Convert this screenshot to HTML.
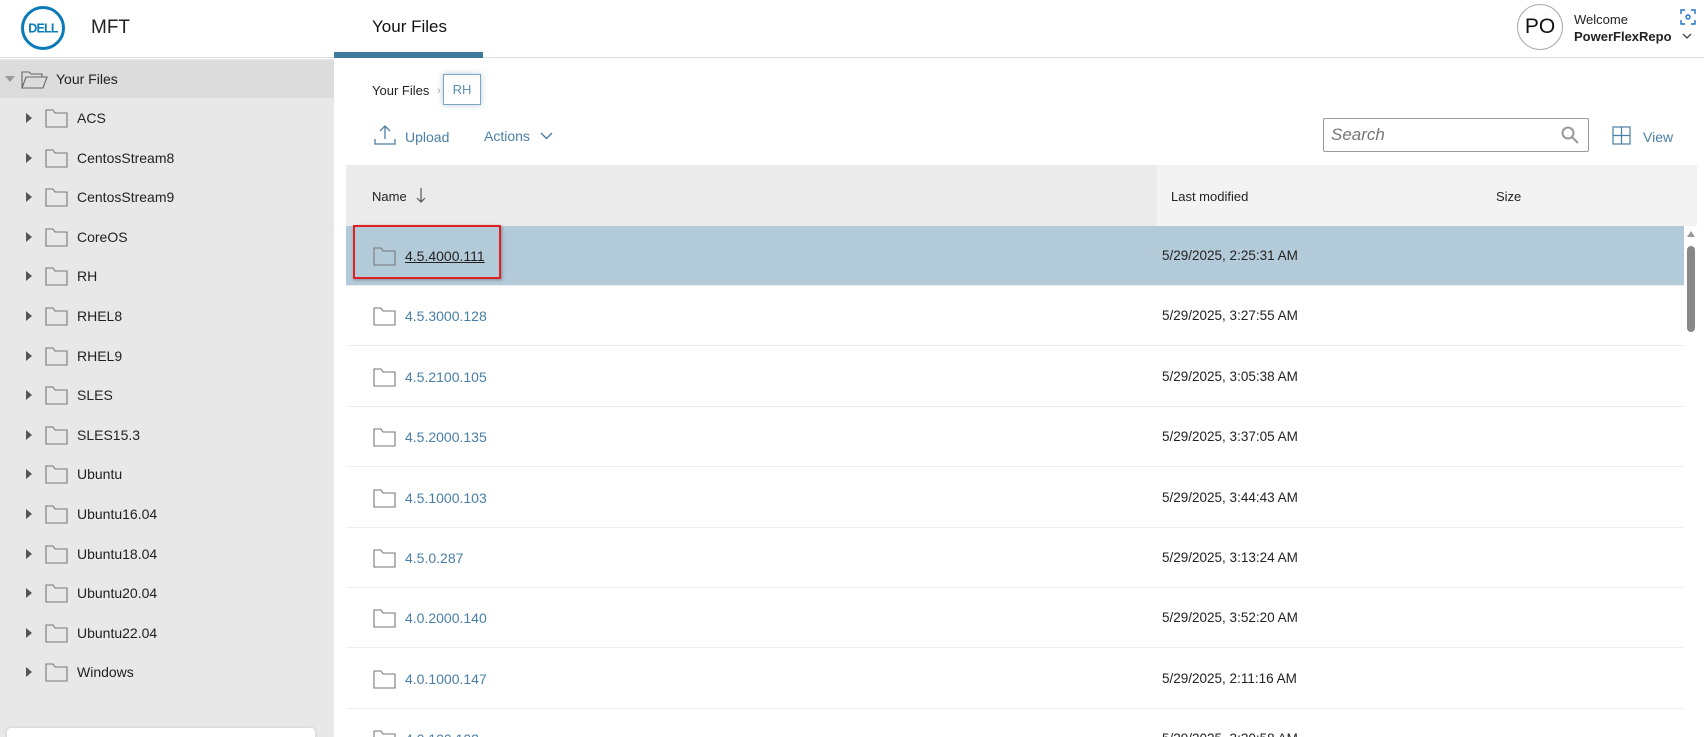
<!DOCTYPE html>
<html style="overflow:hidden"><head><meta charset="utf-8"><style>
*{box-sizing:border-box;margin:0;padding:0}
html,body{width:1704px;height:737px;overflow:hidden}
body{background:#fff;font-family:"Liberation Sans",sans-serif;color:#222;font-size:14px}
#wrap{position:relative;width:1704px;height:737px;overflow:hidden}
.a{position:absolute}
.hdr{left:0;top:0;width:1704px;height:58px;border-bottom:1px solid #ddd;background:#fff}
.side{left:0;top:59px;width:334px;height:678px;background:#e8e8e8}
.tri{width:0;height:0;border-top:5px solid transparent;border-bottom:5px solid transparent;border-left:6px solid #555}
.t{position:absolute;line-height:16px}
.blue{color:#4a7fa5}
.row{position:absolute;left:346px;width:1338px;height:60px;border-bottom:1px solid #eee}
</style></head><body><div id="wrap">
<div class="a hdr"></div>
<svg class="a" style="left:19px;top:5px" width="48" height="46" viewBox="0 0 48 46"><circle cx="24" cy="23" r="20.5" fill="none" stroke="#0b7ab8" stroke-width="3"/><text x="24" y="27.5" text-anchor="middle" font-family="Liberation Sans" font-weight="bold" font-size="12.5" fill="#0b7ab8" letter-spacing="-0.8">DELL</text></svg>
<div class="a t" style="left:91px;top:18px;font-size:19px;line-height:20px">MFT</div>
<div class="a t" style="left:372px;top:17px;font-size:17px;line-height:20px;color:#111">Your Files</div>
<div class="a" style="left:334px;top:52px;width:149px;height:6px;background:#3e7a9c"></div>
<div class="a" style="left:1517px;top:4px;width:46px;height:46px;border:1px solid #aaa;border-radius:50%;text-align:center;line-height:44px;font-size:21px;color:#111">PO</div>
<div class="a t" style="left:1574px;top:12px;font-size:13px">Welcome</div>
<div class="a t" style="left:1574px;top:29px;font-size:13px;font-weight:bold">PowerFlexRepo</div>
<svg class="a" style="left:1682px;top:33px" width="10" height="7"><path d="M1 1l4 4 4-4" fill="none" stroke="#444" stroke-width="1.3"/></svg>
<svg class="a" style="left:1680px;top:9px" width="16" height="16" viewBox="0 0 16 16" fill="none" stroke="#1a73c9" stroke-width="1.4"><path d="M1 5V1h4M11 1h4v4M15 11v4h-4M5 15H1v-4"/><circle cx="8" cy="8" r="2"/></svg>

<div class="a side"></div>
<div class="a" style="left:0;top:60px;width:334px;height:38px;background:#dcdcdc"></div>
<div class="a" style="left:5px;top:76px;border-left:5px solid transparent;border-right:5px solid transparent;border-top:6px solid #999;width:0;height:0"></div>
<svg class="a" style="left:21px;top:70px" width="27" height="19"><path d="M1 18V2h7l2 2h11v3M1 18l4-11h21l-4 11z" fill="none" stroke="#666" stroke-width="1.1"/></svg>
<div class="a t" style="left:56px;top:71px">Your Files</div>

<div id="tree"></div>

<div class="a" style="left:7px;top:728px;width:308px;height:20px;background:#fff;border-radius:4px;box-shadow:0 0 3px rgba(0,0,0,.15)"></div>

<div class="a t" style="left:372px;top:83px;font-size:13px">Your Files</div>
<div class="a t" style="left:437px;top:83px;font-size:11px;color:#aaa">›</div>
<div class="a" style="left:443px;top:74px;width:38px;height:31px;border:1px solid #7da6c1;box-shadow:0 0 6px rgba(80,130,170,.4);text-align:center;line-height:29px;color:#5c8fb3;font-size:13px">RH</div>

<svg class="a" style="left:374px;top:124px" width="22" height="22" fill="none" stroke="#4a7fa5" stroke-width="1.3"><path d="M11 2v13M6 7l5-5 5 5M1 15v5h20v-5"/></svg>
<div class="a t blue" style="left:405px;top:129px">Upload</div>
<div class="a t blue" style="left:484px;top:128px">Actions</div>
<svg class="a" style="left:540px;top:132px" width="13" height="8"><path d="M1 1l5.5 5.5L12 1" fill="none" stroke="#4a7fa5" stroke-width="1.4"/></svg>

<div class="a" style="left:1323px;top:118px;width:266px;height:34px;border:1px solid #999;border-radius:2px"></div>
<div class="a t" style="left:1331px;top:126px;font-size:17px;line-height:18px;font-style:italic;color:#777">Search</div>
<svg class="a" style="left:1561px;top:126px" width="18" height="18" fill="none" stroke="#999" stroke-width="2"><circle cx="7" cy="7" r="5.5"/><path d="M11 11l6 6"/></svg>
<svg class="a" style="left:1612px;top:126px" width="19" height="19" fill="none" stroke="#4a7fa5" stroke-width="1.2"><rect x="1" y="1" width="17" height="17"/><path d="M9.5 1v17M1 9.5h17"/></svg>
<div class="a t blue" style="left:1643px;top:129px">View</div>

<div class="a" style="left:346px;top:165px;width:811px;height:61px;background:#ebebeb"></div>
<div class="a" style="left:1157px;top:165px;width:540px;height:61px;background:#f3f3f3"></div>
<div class="a t" style="left:372px;top:189px;font-size:13px">Name</div>
<svg class="a" style="left:416px;top:187px" width="10" height="17" fill="none" stroke="#555" stroke-width="1.2"><path d="M5 1v14M1 11l4 4 4-4"/></svg>
<div class="a t" style="left:1171px;top:189px;font-size:13px">Last modified</div>
<div class="a t" style="left:1496px;top:189px;font-size:13px">Size</div>

<div id="rows"></div>

<div class="a" style="left:353px;top:225px;width:148px;height:54px;border:2px solid #e02020;box-shadow:1px 1px 3px rgba(0,0,0,.3)"></div>

<div class="a" style="left:1686px;top:226px;width:11px;height:511px;background:#fff"></div>
<div class="a" style="left:1687px;top:231px;border-left:4px solid transparent;border-right:4px solid transparent;border-bottom:6px solid #999;width:0;height:0"></div>
<div class="a" style="left:1687px;top:246px;width:8px;height:86px;background:#888;border-radius:4px"></div>
</div>
<script>
var names=["ACS","CentosStream8","CentosStream9","CoreOS","RH","RHEL8","RHEL9","SLES","SLES15.3","Ubuntu","Ubuntu16.04","Ubuntu18.04","Ubuntu20.04","Ubuntu22.04","Windows"];
var fold='<path d="M1 18V1h7l2 3h12v14z" fill="none" stroke="#777" stroke-width="1.1"/>';
var h="";
names.forEach(function(n,i){var y=118+i*39.6;
h+='<div class="a tri" style="left:26px;top:'+(y-5)+'px"></div>';
h+='<svg class="a" style="left:45px;top:'+(y-9)+'px" width="24" height="20">'+fold+'</svg>';
h+='<div class="a t" style="left:77px;top:'+(y-8)+'px">'+n+'</div>';});
document.getElementById("tree").innerHTML=h;
var rows=[["4.5.4000.111","2:25:31"],["4.5.3000.128","3:27:55"],["4.5.2100.105","3:05:38"],["4.5.2000.135","3:37:05"],["4.5.1000.103","3:44:43"],["4.5.0.287","3:13:24"],["4.0.2000.140","3:52:20"],["4.0.1000.147","2:11:16"],["4.0.100.102","3:20:58"]];
h="";
rows.forEach(function(r,i){var top=226+i*60.4;var sel=i==0;
h+='<div class="row" style="top:'+top+'px;'+(sel?'background:#b3cad8;':'')+'"></div>';
h+='<svg class="a" style="left:373px;top:'+(top+21)+'px" width="24" height="20">'+fold+'</svg>';
h+='<div class="a t" style="left:405px;top:'+(top+22)+'px;'+(sel?'color:#222;text-decoration:underline':'color:#4a7fa5')+'">'+r[0]+'</div>';
h+='<div class="a t" style="left:1162px;top:'+(top+22)+'px;font-size:13.5px">5/29/2025, '+r[1]+' AM</div>';});
document.getElementById("rows").innerHTML=h;
</script>
</body></html>
